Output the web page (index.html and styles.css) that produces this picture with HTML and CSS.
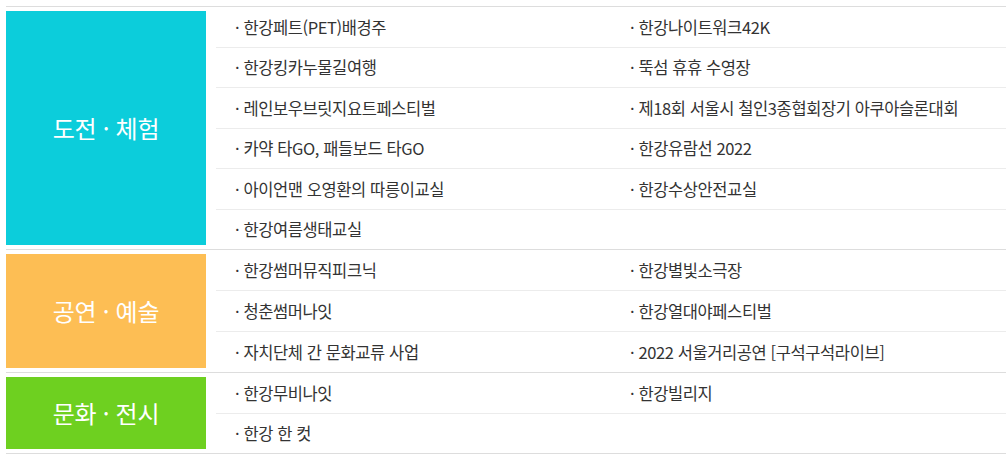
FILE: index.html
```html
<!DOCTYPE html>
<html lang="ko">
<head>
<meta charset="utf-8">
<title>프로그램 목록</title>
<link rel="stylesheet" href="styles.css">
</head>
<body>
<div class="board">
  <section class="sec">
    <h2 class="cat cat-blue">도전 · 체험</h2>
    <ul class="items">
      <li>· 한강페트(PET)배경주</li>
      <li>· 한강나이트워크42K</li>
      <li>· 한강킹카누물길여행</li>
      <li>· 뚝섬 휴휴 수영장</li>
      <li>· 레인보우브릿지요트페스티벌</li>
      <li>· 제18회 서울시 철인3종협회장기 아쿠아슬론대회</li>
      <li>· 카약 타GO, 패들보드 타GO</li>
      <li>· 한강유람선 2022</li>
      <li>· 아이언맨 오영환의 따릉이교실</li>
      <li>· 한강수상안전교실</li>
      <li>· 한강여름생태교실</li>
      <li class="empty"></li>
    </ul>
  </section>
  <section class="sec">
    <h2 class="cat cat-orange">공연 · 예술</h2>
    <ul class="items">
      <li>· 한강썸머뮤직피크닉</li>
      <li>· 한강별빛소극장</li>
      <li>· 청춘썸머나잇</li>
      <li>· 한강열대야페스티벌</li>
      <li>· 자치단체 간 문화교류 사업</li>
      <li>· 2022 서울거리공연 [구석구석라이브]</li>
    </ul>
  </section>
  <section class="sec">
    <h2 class="cat cat-green">문화 · 전시</h2>
    <ul class="items">
      <li>· 한강무비나잇</li>
      <li>· 한강빌리지</li>
      <li>· 한강 한 컷</li>
      <li class="empty"></li>
    </ul>
  </section>
</div>
</body>
</html>
```

FILE: styles.css
```css
html, body {
  margin: 0;
  padding: 0;
  background: #fff;
}

body {
  font-family: "Noto Sans CJK KR", "Noto Sans", sans-serif;
  color: #333;
}

.board {
  width: 1000px;
  margin: 6px 0 0 6px;
  border-top: 1px solid #ddd;
}

.sec {
  display: flex;
  border-bottom: 1px solid #ddd;
}

.cat {
  flex: 0 0 200px;
  margin: 4px 10px 4px 0;
  display: flex;
  align-items: center;
  justify-content: center;
  font-size: 24px;
  font-weight: 400;
  color: #fff;
  letter-spacing: -0.3px;
  line-height: 1;
}

.cat-blue { background: #0ccddb; }
.cat-orange { background: #fdbe54; min-height: 114px; }
.cat-green { background: #6ed020; }

.items {
  flex: 1;
  list-style: none;
  margin: 0;
  padding: 0;
  display: grid;
  grid-template-columns: 1fr 1fr;
  grid-auto-rows: minmax(39.5px, 1fr);
  row-gap: 1px;
  background: #ececec;
}

.items li {
  background: #fff;
  display: flex;
  align-items: center;
  padding-left: 19px;
  font-size: 16.5px;
  line-height: 1;
  letter-spacing: -0.4px;
  white-space: nowrap;
}
```
